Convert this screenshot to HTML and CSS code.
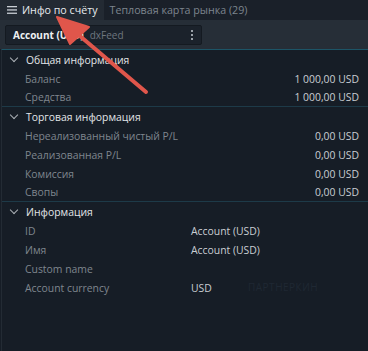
FILE: index.html
```html
<!DOCTYPE html>
<html lang="ru">
<head>
<meta charset="utf-8">
<link rel="stylesheet" href="styles.css">
</head>
<body>
<div class="app">
  <div class="tabs">
    <div class="tab active">
      <svg class="burger" width="10" height="8" viewBox="0 0 10 8"><rect x="0" y="0" width="10" height="1.3" fill="#c9ced4"/><rect x="0" y="3.3" width="10" height="1.3" fill="#c9ced4"/><rect x="0" y="6.6" width="10" height="1.3" fill="#c9ced4"/></svg>
      <span>Инфо по счёту</span>
    </div>
    <div class="tab">Тепловая карта рынка (29)</div>
  </div>
  <div class="toolbar">
    <div class="select">
      <span class="acc">Account (USD)</span>
      <span class="feed">dxFeed</span>
      <span class="kebab"><i></i><i></i><i></i></span>
    </div>
  </div>
  <div class="content">
    <div class="section">
      <div class="head"><span class="chev"></span>Общая информация</div>
      <div class="row"><span class="label">Баланс</span><span class="val">1 000,00 USD</span></div>
      <div class="row"><span class="label">Средства</span><span class="val">1 000,00 USD</span></div>
    </div>
    <div class="section">
      <div class="head"><span class="chev"></span>Торговая информация</div>
      <div class="row"><span class="label">Нереализованный чистый P/L</span><span class="val">0,00 USD</span></div>
      <div class="row"><span class="label">Реализованная P/L</span><span class="val">0,00 USD</span></div>
      <div class="row"><span class="label">Комиссия</span><span class="val">0,00 USD</span></div>
      <div class="row"><span class="label">Свопы</span><span class="val">0,00 USD</span></div>
    </div>
    <div class="section last">
      <div class="head"><span class="chev"></span>Информация</div>
      <div class="row"><span class="label fix">ID</span><span class="val">Account (USD)</span></div>
      <div class="row"><span class="label fix">Имя</span><span class="val">Account (USD)</span></div>
      <div class="row"><span class="label fix">Custom name</span><span class="val"></span></div>
      <div class="row"><span class="label fix">Account currency</span><span class="val">USD</span><span class="wm">ПАРТНЕРКИН</span></div>
    </div>
  </div>
  <svg class="arrow" width="368" height="351" viewBox="0 0 368 351">
    <line x1="146" y1="92" x2="74" y2="31" stroke="#e0564b" stroke-width="4" stroke-linecap="round"/>
    <polygon points="57,17 89,27 70,44" fill="#e0564b" stroke="#e0564b" stroke-width="2" stroke-linejoin="round"/>
  </svg>
</div>
</body>
</html>
```
FILE: styles.css
```css
* { box-sizing: border-box; }
html, body { margin: 0; padding: 0; }
body {
  background: #161d26;
  font-family: "Open Sans", "Noto Sans", sans-serif;
  width: 368px;
  height: 351px;
  overflow: hidden;
}
.app { position: relative; width: 368px; height: 351px; }
.tabs {
  height: 20px;
  display: flex;
  background: #1a2029;
}
.tab {
  display: flex;
  align-items: center;
  font-size: 10.7px;
  color: #7d858e;
  padding: 0 6px;
  white-space: nowrap;
}
.tab.active {
  background: #232a33;
  color: #e8ebee;
  padding: 0 6px 0 7px;
}
.burger { margin-right: 5px; flex: none; }
.toolbar {
  height: 29px;
  background: #262e37;
  padding: 5px 0 0 5px;
}
.select {
  width: 197px;
  height: 20px;
  background: #1b222b;
  border: 1px solid #141a21;
  border-radius: 2px;
  display: flex;
  align-items: center;
  padding-left: 7px;
  font-size: 10px;
}
.acc { color: #eef0f2; font-weight: 700; }
.feed { color: #6e767f; margin-left: 6px; flex: 1; }
.kebab {
  display: flex;
  flex-direction: column;
  gap: 2px;
  width: 10px;
  align-items: center;
  margin-right: 4px;
}
.kebab i { display: block; width: 2px; height: 2px; background: #9aa1a8; }
.content {
  border-top: 1px solid #1d5567;
  margin-left: 1px;
  border-left: 1px solid #232b34;
  height: 302px;
}
.section { border-bottom: 1px solid #1d3a48; }
.section.last { border-bottom: none; }
.head, .row {
  height: 19px;
  display: flex;
  align-items: center;
  font-size: 10.4px;
}
.section .row:last-child { height: 18px; }
.section.last .row:last-child { height: 19px; }
.head { color: #e3e6e9; padding-left: 7px; }
.chev {
  width: 6px; height: 6px;
  border-right: 1px solid #aab0b6;
  border-bottom: 1px solid #aab0b6;
  transform: rotate(45deg);
  margin: -4px 9px 0 2px;
}
.row { padding-left: 23px; padding-right: 9px; position: relative; }
.label { color: #7f868e; flex: 1; white-space: nowrap; }
.label.fix { flex: 0 0 166px; }
.val { color: #c9ced3; white-space: nowrap; }
.wm {
  position: absolute;
  left: 246px;
  top: 2px;
  font-size: 10px;
  color: #1f2833;
  letter-spacing: 0.5px;
}
.arrow { position: absolute; left: 0; top: 0; pointer-events: none; }
```
